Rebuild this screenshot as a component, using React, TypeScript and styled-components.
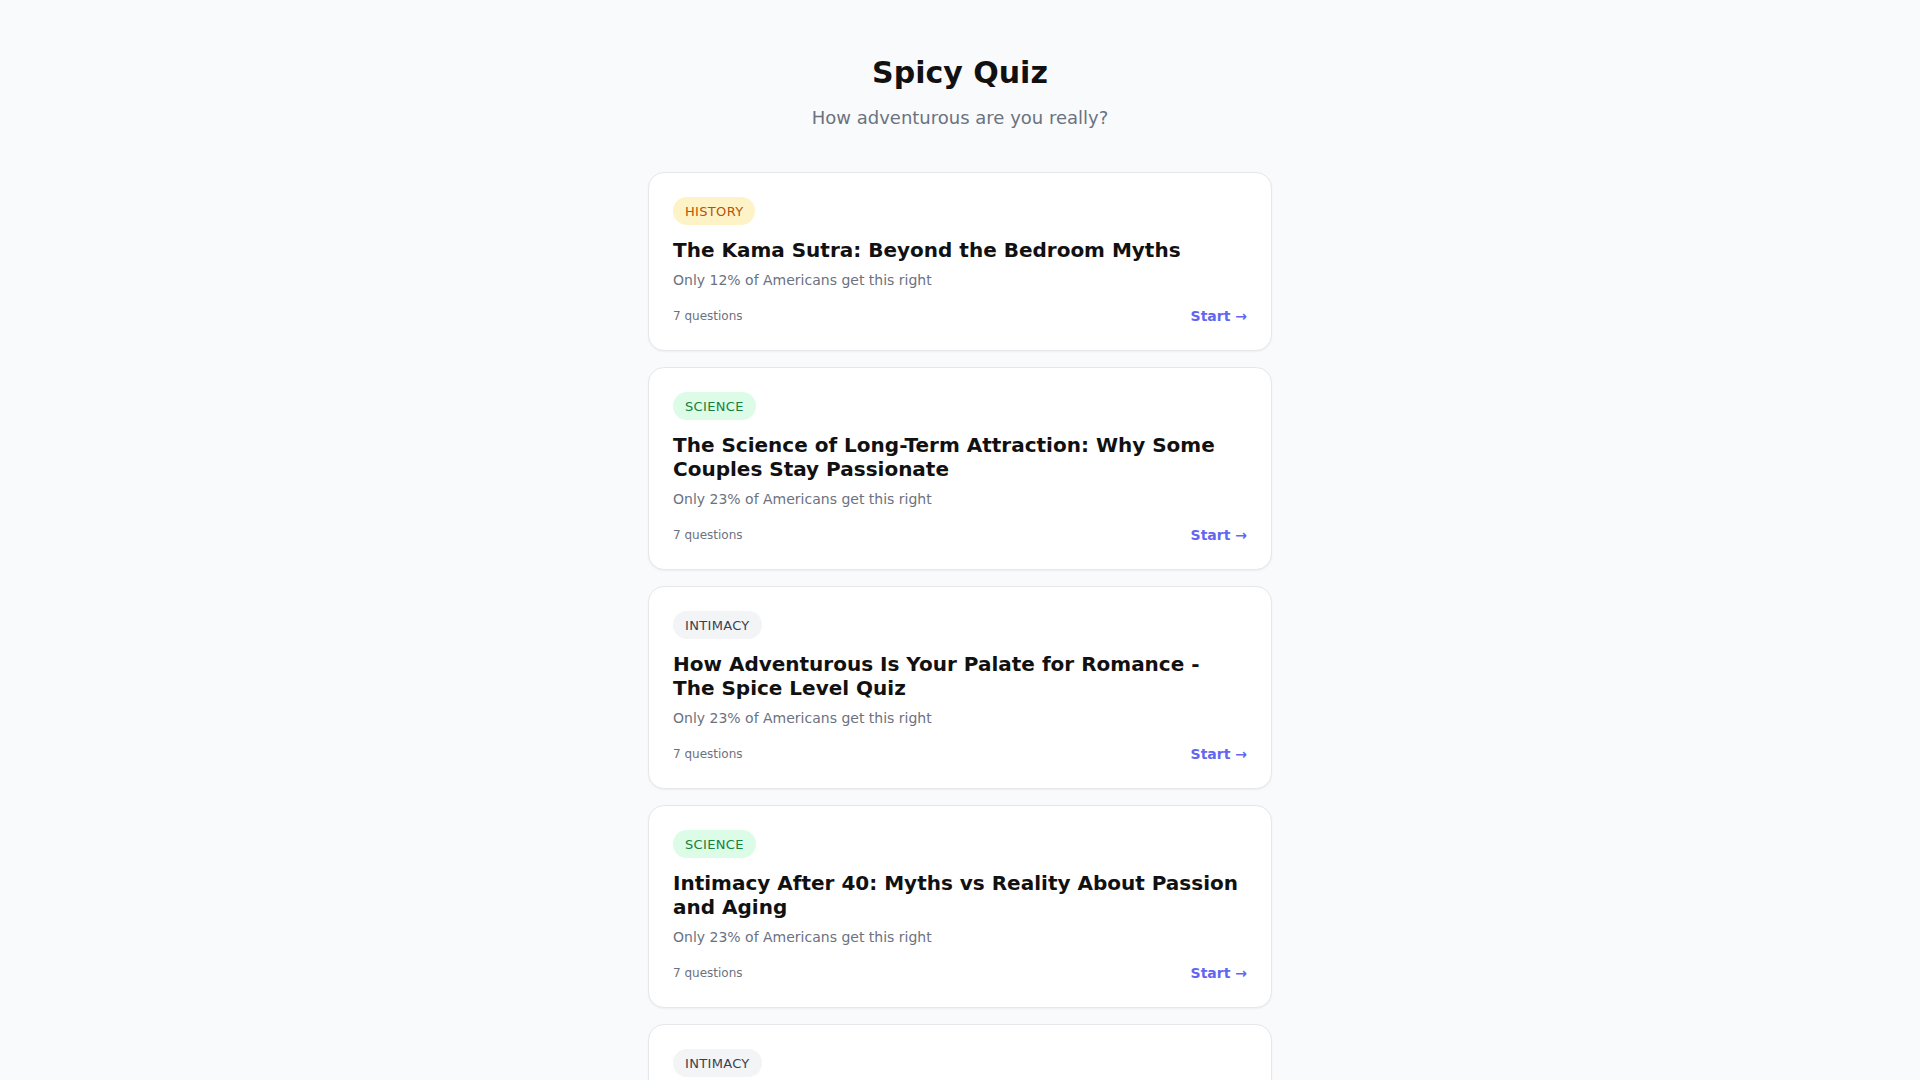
import React from 'react';
import styled, { createGlobalStyle } from 'styled-components';

type Category = 'history' | 'science' | 'intimacy';

interface Quiz {
  id: number;
  category: Category;
  title: string;
  stat: string;
  questions: number;
}

const quizzes: Quiz[] = [
  {
    id: 1,
    category: 'history',
    title: 'The Kama Sutra: Beyond the Bedroom Myths',
    stat: 'Only 12% of Americans get this right',
    questions: 7,
  },
  {
    id: 2,
    category: 'science',
    title: 'The Science of Long-Term Attraction: Why Some Couples Stay Passionate',
    stat: 'Only 23% of Americans get this right',
    questions: 7,
  },
  {
    id: 3,
    category: 'intimacy',
    title: 'How Adventurous Is Your Palate for Romance - The Spice Level Quiz',
    stat: 'Only 23% of Americans get this right',
    questions: 7,
  },
  {
    id: 4,
    category: 'science',
    title: 'Intimacy After 40: Myths vs Reality About Passion and Aging',
    stat: 'Only 23% of Americans get this right',
    questions: 7,
  },
  {
    id: 5,
    category: 'intimacy',
    title: 'Love Languages: What Really Keeps the Spark Alive',
    stat: 'Only 18% of Americans get this right',
    questions: 7,
  },
];

// цвета бейджей по категориям
const badgeColors: Record<Category, { bg: string; fg: string }> = {
  history: { bg: '#fef3c7', fg: '#b45309' },
  science: { bg: '#dcfce7', fg: '#15803d' },
  intimacy: { bg: '#f3f4f6', fg: '#374151' },
};

function App() {
  return (
    <>
      <GlobalStyle />
      <Page>
        <Header>
          <Title>Spicy Quiz</Title>
          <Subtitle>How adventurous are you really?</Subtitle>
        </Header>

        <List>
          {quizzes.map((q) => (
            <Card key={q.id}>
              <Badge $category={q.category}>{q.category}</Badge>
              <QuizTitle>{q.title}</QuizTitle>
              <Stat>{q.stat}</Stat>
              <Footer>
                <Count>{q.questions} questions</Count>
                <StartLink href="#">Start →</StartLink>
              </Footer>
            </Card>
          ))}
        </List>
      </Page>
    </>
  );
}

const GlobalStyle = createGlobalStyle`
  * {
    box-sizing: border-box;
  }

  body {
    margin: 0;
    background: #f9fafb;
    font-family: "DejaVu Sans", "Noto Sans", sans-serif;
    color: #111827;
  }
`;

const Page = styled.main`
  max-width: 672px;
  margin: 0 auto;
  padding: 55px 24px 48px;
`;

const Header = styled.header`
  text-align: center;
  margin-bottom: 40px;
`;

const Title = styled.h1`
  margin: 0;
  font-size: 30px;
  line-height: 36px;
  font-weight: 700;
  color: #111111;
`;

const Subtitle = styled.p`
  margin: 13px 0 0;
  font-size: 18px;
  line-height: 28px;
  color: #6b7280;
`;

const List = styled.div`
  display: flex;
  flex-direction: column;
  gap: 16px;
`;

const Card = styled.article`
  display: flex;
  flex-direction: column;
  align-items: flex-start;
  background: #ffffff;
  border: 1px solid #e5e7eb;
  border-radius: 16px;
  box-shadow: 0 1px 2px rgba(0, 0, 0, 0.05);
  padding: 24px;
`;

const Badge = styled.span<{ $category: Category }>`
  display: inline-flex;
  align-items: center;
  height: 28px;
  padding: 0 12px;
  border-radius: 9999px;
  font-size: 13px;
  letter-spacing: 0.025em;
  text-transform: uppercase;
  background: ${(p) => badgeColors[p.$category].bg};
  color: ${(p) => badgeColors[p.$category].fg};
`;

const QuizTitle = styled.h2`
  margin: 13px 0 0;
  font-size: 20px;
  line-height: 24px;
  font-weight: 700;
  color: #111111;
`;

const Stat = styled.p`
  margin: 8px 0 0;
  font-size: 14px;
  line-height: 20px;
  color: #6b7280;
`;

const Footer = styled.div`
  align-self: stretch;
  display: flex;
  align-items: center;
  justify-content: space-between;
  margin-top: 16px;
  height: 20px;
`;

const Count = styled.span`
  font-size: 12px;
  line-height: 16px;
  color: #6b7280;
`;

const StartLink = styled.a`
  font-size: 14px;
  line-height: 20px;
  font-weight: 700;
  color: #6366f1;
  text-decoration: none;

  &:hover {
    color: #4f46e5;
  }
`;

export default App;
